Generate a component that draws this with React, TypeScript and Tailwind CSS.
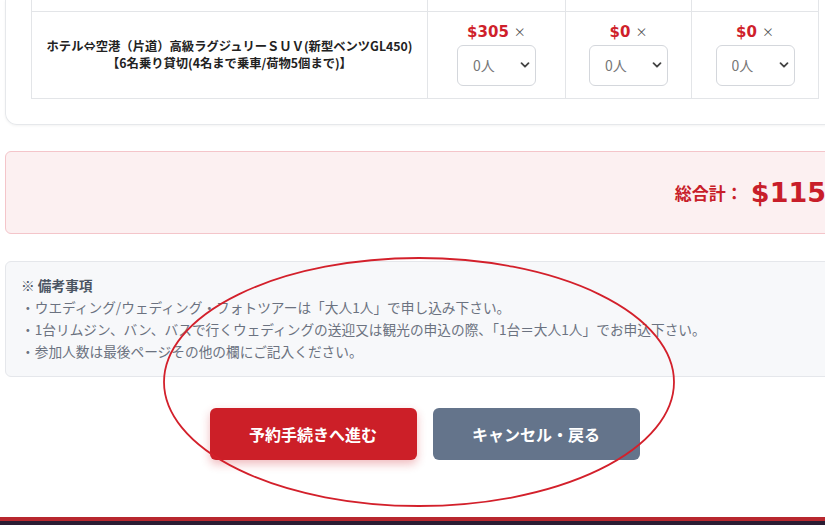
import React from "react";

const Chevron = () => (
  <svg width="10" height="10" viewBox="0 0 10 10" className="absolute right-[6px] top-1/2 -translate-y-1/2 pointer-events-none">
    <path d="M1.5 3.2 L5 6.7 L8.5 3.2" fill="none" stroke="#444" strokeWidth="1.8" strokeLinecap="round" strokeLinejoin="round" />
  </svg>
);

const PriceCell: React.FC<{ price: string; width: string }> = ({ price, width }) => (
  <div className={`${width} border-r border-[#e3e5e8] flex flex-col items-center justify-center gap-[5px]`}>
    <div className="flex items-baseline gap-[5px]">
      <span className="font-['DejaVu_Sans',sans-serif] text-[15px] font-bold text-[#cf1f2b] leading-none">{price}</span>
      <span className="text-[12px] text-[#555] leading-none">×</span>
    </div>
    <div className="relative w-[79px] h-[41px]">
      <select className="appearance-none w-full h-full border border-[#d4d7dc] rounded-[6px] bg-white pl-[15px] text-[14px] text-[#777] outline-none">
        <option>0人</option>
      </select>
      <Chevron />
    </div>
  </div>
);

export default function App() {
  return (
    <div className="relative w-[825px] h-[525px] overflow-hidden bg-white font-['Noto_Sans_CJK_JP',sans-serif]">
      <div className="ml-[5px] w-[839px] flex flex-col">
        {/* reservation table card */}
        <div className="border-x border-b border-[#e6e8eb] rounded-b-[12px] px-[25px] pb-[25px] shadow-[0_1px_3px_rgba(0,0,0,0.05)]">
          <div className="w-[788px] border-l border-[#e3e5e8]">
            <div className="flex h-[12px] border-b border-[#e3e5e8]">
              <div className="w-[396px] border-r border-[#e3e5e8]" />
              <div className="w-[138px] border-r border-[#e3e5e8]" />
              <div className="w-[126px] border-r border-[#e3e5e8]" />
              <div className="w-[127px] border-r border-[#e3e5e8]" />
            </div>
            <div className="flex h-[87px] border-b border-[#e3e5e8]">
              <div className="w-[396px] border-r border-[#e3e5e8] flex items-center justify-center text-center text-[12.3px] leading-[17px] font-bold text-[#222]">
                <p>
                  ホテル⇔空港（片道）高級ラグジュリーＳＵＶ(新型ベンツGL450)
                  <br />
                  【6名乗り貸切(4名まで乗車/荷物5個まで)】
                </p>
              </div>
              <PriceCell price="$305" width="w-[138px]" />
              <PriceCell price="$0" width="w-[126px]" />
              <PriceCell price="$0" width="w-[127px]" />
            </div>
          </div>
        </div>

        {/* grand total */}
        <div className="mt-[26px] h-[83px] border border-[#f4c5ca] bg-[#fcf0f1] rounded-[6px] flex items-center justify-end pr-[17px] text-[#c81e2a] font-bold">
          <span className="text-[17px] mr-[8px]">総合計：</span>
          <span className="font-['DejaVu_Sans',sans-serif] text-[27px] leading-none">$115</span>
        </div>

        {/* notes */}
        <div className="mt-[27px] h-[116px] border border-[#e5e7eb] bg-[#f7f8fa] rounded-[6px] px-[15px] pt-[12px] text-[13.7px] leading-[22px] text-[#6b7280]">
          <p className="font-bold text-[#4b5563]">※ 備考事項</p>
          <p>・ウエディング/ウェディング・フォトツアーは「大人1人」で申し込み下さい。</p>
          <p>・1台リムジン、バン、バスで行くウェディングの送迎又は観光の申込の際、「1台＝大人1人」でお申込下さい。</p>
          <p>・参加人数は最後ページその他の欄にご記入ください。</p>
        </div>

        {/* buttons */}
        <div className="mt-[31px] flex justify-center gap-[16px]">
          <button className="w-[207px] h-[52px] rounded-[6px] bg-[#cc1f28] text-white text-[16px] font-bold shadow-[0_4px_10px_rgba(204,31,40,0.3)]">
            予約手続きへ進む
          </button>
          <button className="w-[207px] h-[52px] rounded-[6px] bg-[#64748b] text-white text-[16px] font-bold">
            キャンセル・戻る
          </button>
        </div>
      </div>

      {/* footer */}
      <div className="absolute left-0 right-0 top-[517px]">
        <div className="h-[4px] bg-[#b8282f]" />
        <div className="h-[10px] bg-[#2a1d33]" />
      </div>

      {/* hand-drawn annotation ellipse */}
      <svg className="absolute inset-0 pointer-events-none" width="825" height="525">
        <ellipse cx="419" cy="382" rx="255" ry="124" fill="none" stroke="#d3202b" strokeWidth="1.8" />
      </svg>
    </div>
  );
}
